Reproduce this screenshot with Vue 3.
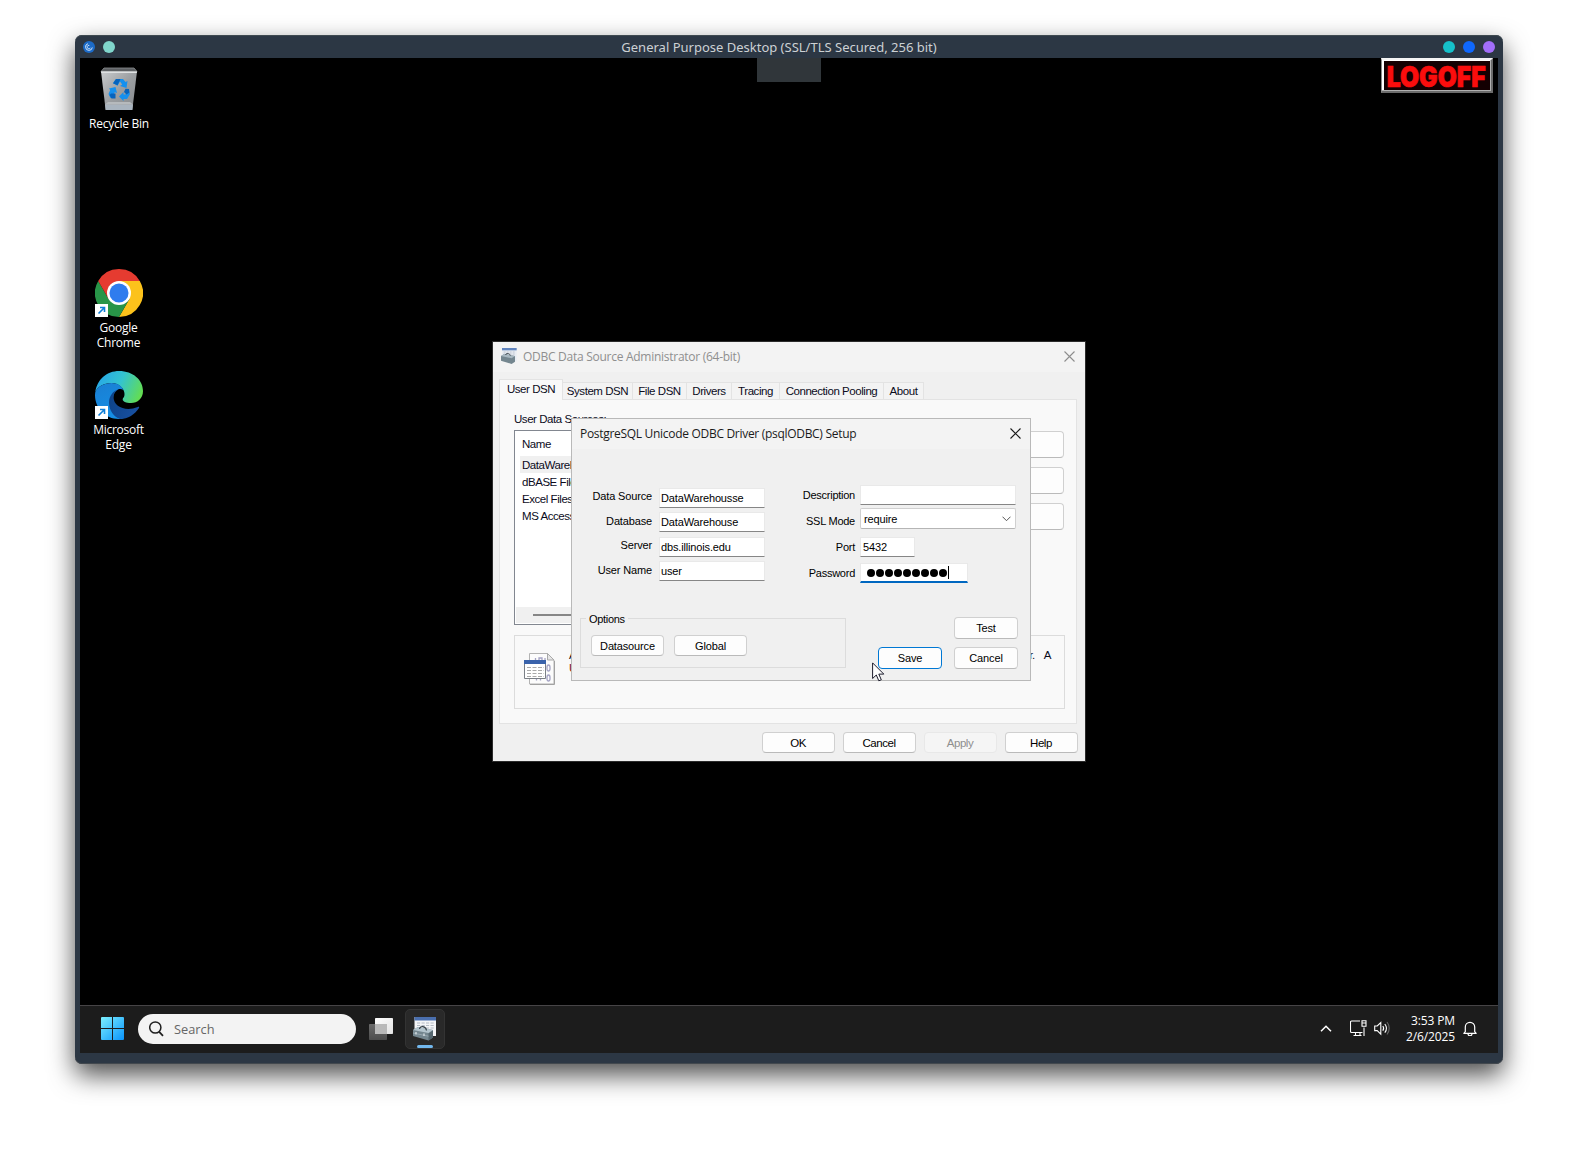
<script setup>
const tabs = [
  { name: 'User DSN', width: 64 },
  { name: 'System DSN', width: 70 },
  { name: 'File DSN', width: 54 },
  { name: 'Drivers', width: 45 },
  { name: 'Tracing', width: 48 },
  { name: 'Connection Pooling', width: 104 },
  { name: 'About', width: 40 },
]
const sources = ['DataWarehouse', 'dBASE Files', 'Excel Files', 'MS Access Database']
const leftFields = [
  { label: 'Data Source', value: 'DataWarehousse' },
  { label: 'Database', value: 'DataWarehouse' },
  { label: 'Server', value: 'dbs.illinois.edu' },
  { label: 'User Name', value: 'user' },
]
</script>

<template>
  <div class="page">
    <div class="window">
      <header class="titlebar">
        <div class="side">
          <svg width="12" height="12" viewBox="0 0 12 12">
            <circle cx="6" cy="6" r="6" fill="#1c6bc8" />
            <path d="M9.300 6.500A3.400 3.400 0 1 1 5 2.700M6.300 4.400A1.700 1.700 0 1 0 7.400 6.800" fill="none" stroke="#cfe2f8" stroke-width="1" />
          </svg>
          <i class="dot teal"></i>
        </div>
        <span class="caption">General Purpose Desktop (SSL/TLS Secured, 256 bit)</span>
        <div class="side right">
          <i class="dot cyan"></i><i class="dot blue"></i><i class="dot purple"></i>
        </div>
      </header>

      <main class="desktop">
        <div class="pull-tab"></div>
        <button class="logoff"><span>LOGOFF</span></button>

        <div class="shortcut recycle">
          <svg width="48" height="48" viewBox="0 0 48 48">
            <defs>
              <linearGradient id="bin" x1="0" y1="0" x2="1" y2="1">
                <stop offset="0" stop-color="#c9cbcd" /><stop offset=".5" stop-color="#9b9ea1" /><stop offset="1" stop-color="#85898c" />
              </linearGradient>
            </defs>
            <path d="M9 2h30l3 3.500H6z" fill="#5d6063" stroke="#8e9192" stroke-width=".8" />
            <path d="M6 5.500h36L37.300 44H10.700z" fill="url(#bin)" />
            <path d="M6 5.500h36l-.2 1.400H6.200z" fill="#dfe1e2" />
            <path d="M10 38.500h28L37.300 44H10.700z" fill="#a9b4bf" />
            <path d="M10 38.500 13 36h22l3 2.500z" fill="#b6babd" />
            <path d="M21 13h7l2.500 3 2-1-1 7-6.500-2 2.200-1.500L25 15.500l-2.500 4.300-4.500-2.600z" fill="#1590ee" />
            <path d="M21 13h4.500L22.500 19.300 18 17.200z" fill="#0663bd" />
            <path d="M14 22.500l6.500-1.500 1.500 6-2.200-.8-2 3.300L20 32h-4.500l-2-4 1.700-4z" fill="#1590ee" />
            <path d="M16 27.500h4.500v5H16.500L14.500 29z" fill="#0663bd" />
            <path d="M33 23.500 35 28l-3 5h-3.500v2L24 30.500 28.500 26v2.400h2z" fill="#1590ee" />
            <path d="M30.500 22.800 34 23l.5 3.500-3 2-2.500-2.500z" fill="#0663bd" />
          </svg>
          <span>Recycle Bin</span>
        </div>

        <div class="shortcut chrome">
          <svg width="48" height="48" viewBox="0 0 48 48">
            <path d="M24 24 3.215 12A24 24 0 0 1 44.785 12z" fill="#e53b30" />
            <path d="M24 12H44.785A24 24 0 0 1 24 48L34.392 30z" fill="#fcc21b" />
            <path d="M34.392 30 24 48A24 24 0 0 1 3.215 12L13.608 30z" fill="#289548" />
            <path d="M3.215 12 13.608 30 24 24V12z" fill="#e53b30" />
            <circle cx="24" cy="24" r="12" fill="#fff" />
            <circle cx="24" cy="24" r="9.500" fill="#2f7cee" />
            <path d="M0 35h13v13H0z" fill="#fff" />
            <path d="M3.500 44.500 9 39M5 38.500h4.500V43" fill="none" stroke="#0f7fd8" stroke-width="1.600" />
          </svg>
          <span>Google<br />Chrome</span>
        </div>

        <div class="shortcut edge">
          <svg width="48" height="48" viewBox="0 0 48 48">
            <defs>
              <linearGradient id="eTop" x1="0" y1=".3" x2="1" y2=".6">
                <stop offset="0" stop-color="#27a6e8" /><stop offset=".5" stop-color="#34c4cf" /><stop offset="1" stop-color="#63dd52" />
              </linearGradient>
              <linearGradient id="eMid" x1=".2" y1="0" x2=".6" y2="1">
                <stop offset="0" stop-color="#1a7fd3" /><stop offset="1" stop-color="#1590e6" />
              </linearGradient>
              <linearGradient id="eLow" x1="0" y1="0" x2="1" y2=".4">
                <stop offset="0" stop-color="#0d4286" /><stop offset="1" stop-color="#174f9f" />
              </linearGradient>
            </defs>
            <path d="M.300 21C2 8.500 12 0 24 0c14 0 24 9 24 20 0 7.500-5.500 12-12 12-5 0-8.300-1.600-8.300-3.500 0-1.500 1.800-2 1.800-5.500 0-5-5-11-13-11C8.500 12 3 15.500.300 21z" fill="url(#eTop)" />
            <path d="M.200 21.500C2.500 15.500 9 12 16.500 12c6.500 0 10.500 3.300 12 7-2-1.200-4-1.200-5.500-.500-3 1.500-5 5-5 9 0 9 7 15.500 15.500 16.500-3 2.600-6 4-9.500 4C10 48 0 37 0 24z" fill="url(#eMid)" />
            <path d="M23 18.500c-5 1.500-9 6.500-9 13 0 8 5 14.500 11 16.500 8 0 14.800-4.500 19-11 .6-1-.3-1.500-1.200-1C31 41 18.500 36 18.500 26c0-3 1.800-6 4.500-7.500z" fill="url(#eLow)" />
            <path d="M0 35h13v13H0z" fill="#fff" />
            <path d="M3.500 44.500 9 39M5 38.500h4.500V43" fill="none" stroke="#0f7fd8" stroke-width="1.600" />
          </svg>
          <span>Microsoft<br />Edge</span>
        </div>

        <section class="dialog admin">
          <div class="dlg-title">
            <svg class="app-icon" width="16" height="16" viewBox="0 0 24 24">
              <path d="M1.500 0h22v20h-22z" fill="#e9edf3" /><path d="M1.500 0h22v3.500h-22z" fill="#5f83bd" />
              <path d="M4 6h17M4 9h17" stroke="#a9b1c0" stroke-dasharray="3 1.500" />
              <path d="M0 12l5-3 16 3v8.500l-5 3.500L0 19z" fill="#74868f" /><path d="M0 12l5-3 16 3-5 3.500z" fill="#a8b8c1" />
              <path d="M7 10.500c0-3.500 6.500-3 7 1" fill="none" stroke="#3d474e" stroke-width="1.400" />
            </svg>
            <span>ODBC Data Source Administrator (64-bit)</span>
            <svg class="close" width="11" height="11" viewBox="0 0 11 11"><path d="M.5.5l10 10M10.500.5l-10 10" stroke="#8d8d8d" stroke-width="1.100" /></svg>
          </div>
          <nav class="tabs">
            <span v-for="(tab, i) in tabs" :key="tab.name" class="tab" :class="{ active: i === 0 }" :style="{ width: tab.width + 'px' }">{{ tab.name }}</span>
          </nav>
          <div class="panel">
            <div class="list-title">User Data Sources:</div>
            <div class="list-row">
              <div class="list">
                <div class="list-head">Name</div>
                <div v-for="(s, i) in sources" :key="s" class="item" :class="{ picked: i === 0 }">{{ s }}</div>
                <div class="scroll"><i></i></div>
              </div>
              <div class="actions"><i></i><i></i><i></i></div>
            </div>
            <div class="info">
              <svg width="31" height="32" viewBox="0 0 31 32">
                <path d="M5.500.5h18l6.500 6.500v24H5.500z" fill="#fcfcfc" stroke="#b3b3b3" />
                <path d="M6 31.500h24.500V8" fill="none" stroke="#a2a2a2" />
                <path d="M23.500.5v6.500H30z" fill="#e6e6e6" stroke="#a9a9a9" />
                <path d="M11.500 5v4M15 5h3v4h-3zM21 5v4M23 14.500a1.500 2.500 0 0 1 3 0v1a1.500 2.500 0 0 1-3 0zM12.500 22.500v5M16.500 22.500v5M23 24.500a1.500 2.500 0 0 1 3 0v1a1.500 2.500 0 0 1-3 0z" fill="none" stroke="#a4a3c4" stroke-width="1.300" />
                <path d="M.5 7.500h21v18H.5z" fill="#fff" stroke="#7a7f86" />
                <path d="M0 7h22v4H0z" fill="#3a63ab" />
                <path d="M3 14.500h17M3 17.500h17M3 20.500h17M3 23.500h17" stroke="#aaa" stroke-dasharray="4 1.500" />
              </svg>
              <div class="info-text">
                <p>An ODBC User data source stores information about how to connect to the indicated data provider.&nbsp;&nbsp; A</p>
                <p class="second">User data source is only visible to you, and can only be used on the current machine.</p>
              </div>
            </div>
          </div>
          <footer class="dlg-foot">
            <button class="btn">OK</button>
            <button class="btn">Cancel</button>
            <button class="btn off">Apply</button>
            <button class="btn">Help</button>
          </footer>
        </section>

        <section class="dialog setup">
          <div class="dlg-title">
            <span>PostgreSQL Unicode ODBC Driver (psqlODBC) Setup</span>
            <svg class="close" width="11" height="11" viewBox="0 0 11 11"><path d="M.5.5l10 10M10.500.5l-10 10" stroke="#1a1a1a" stroke-width="1.100" /></svg>
          </div>
          <div class="form">
            <div class="col left">
              <div v-for="f in leftFields" :key="f.label" class="row">
                <label>{{ f.label }}</label>
                <div class="input">{{ f.value }}</div>
              </div>
            </div>
            <div class="col rightc">
              <div class="row"><label>Description</label><div class="input wide"></div></div>
              <div class="row ssl">
                <label>SSL Mode</label>
                <div class="combo">require
                  <svg width="9" height="6" viewBox="0 0 9 6"><path d="M.5.7l4 4 4-4" fill="none" stroke="#555" /></svg>
                </div>
              </div>
              <div class="row port"><label>Port</label><div class="input short">5432</div></div>
              <div class="row pass">
                <label>Password</label>
                <div class="input focus"><i v-for="n in 9" :key="n" class="bullet"></i><i class="caret"></i></div>
              </div>
            </div>
          </div>
          <div class="bottom">
            <div class="group">
              <span class="legend">Options</span>
              <button class="btn">Datasource</button>
              <button class="btn">Global</button>
            </div>
            <div class="confirm">
              <button class="btn sm">Test</button>
              <div class="pair">
                <button class="btn sm primary">Save</button>
                <button class="btn sm">Cancel</button>
              </div>
            </div>
          </div>
        </section>

        <svg class="cursor" width="13" height="20" viewBox="0 0 13 20">
          <path d="M.6.900v15.600l3.700-3.500 2.500 5.800 2.500-1-2.500-5.700h5z" fill="#fff" stroke="#1c1c2c" stroke-width="1" />
        </svg>
      </main>

      <footer class="taskbar">
        <svg class="start" width="23" height="23" viewBox="0 0 23 23">
          <defs>
            <linearGradient id="win" gradientUnits="userSpaceOnUse" x1="0" y1="0" x2="23" y2="23"><stop offset="0" stop-color="#7df0ff" /><stop offset="1" stop-color="#0a94fb" /></linearGradient>
          </defs>
          <path d="M0 1a1 1 0 0 1 1-1h10v11H0zM12 0h10a1 1 0 0 1 1 1v10H12zM0 12h11v11H1a1 1 0 0 1-1-1zM12 12h11v10a1 1 0 0 1-1 1H12z" fill="url(#win)" />
        </svg>
        <div class="search">
          <svg width="15" height="16" viewBox="0 0 15 16"><circle cx="6.300" cy="6.500" r="5.600" fill="none" stroke="#1f1f1f" stroke-width="1.500" /><path d="M10.200 10.800 14 14.800" stroke="#1f1f1f" stroke-width="1.800" /></svg>
          <span>Search</span>
        </div>
        <svg class="views" width="24" height="22" viewBox="0 0 24 22">
          <defs>
            <linearGradient id="tvLight" x1="0" y1="0" x2="1" y2="1"><stop offset="0" stop-color="#fff" /><stop offset="1" stop-color="#e2e2e2" /></linearGradient>
            <linearGradient id="tvDark" x1="0" y1="0" x2="0" y2="1"><stop offset="0" stop-color="#6b6b6b" /><stop offset="1" stop-color="#4c4c4c" /></linearGradient>
          </defs>
          <rect x="6" width="18" height="16" rx=".8" fill="url(#tvLight)" />
          <rect y="6" width="18" height="16" rx=".8" fill="url(#tvDark)" />
          <path d="M6 6h12v10H6z" fill="#b9b9b9" />
        </svg>
        <div class="running">
          <svg width="24" height="24" viewBox="0 0 24 24">
            <path d="M1.500 0h21.500v19H1.500z" fill="#f4f5f7" /><path d="M1.500 0h21.500v3.500H1.500z" fill="#4a6fae" />
            <path d="M4 6h17M4 8.500h17M4 11h17" stroke="#b4bac4" stroke-dasharray="3.200 1.300" />
            <path d="M0 13l5-3 15 3v7.500l-4.500 3L0 19z" fill="#74868f" /><path d="M0 13l5-3 15 3-4.500 3z" fill="#b3c4cd" />
            <path d="M15.500 16.500l4.500-3v7l-4.500 3z" fill="#55666f" />
            <path d="M0 16l15.500 3.200" stroke="#a5b5bd" stroke-width=".7" /><path d="M3 15v2.500M11 16.500V19" stroke="#dfe6ea" stroke-width="1.200" />
            <path d="M6.500 12c.5-4 6.500-3 7 1.500" fill="none" stroke="#39434a" stroke-width="1.200" />
          </svg>
          <i></i>
        </div>
        <div class="tray">
          <svg class="up" width="12" height="8" viewBox="0 0 12 8"><path d="M1 6.300l5-5 5 5" fill="none" stroke="#fff" stroke-width="1.500" /></svg>
          <svg class="net" width="17" height="17" viewBox="0 0 17 17">
            <path d="M10 1H1.500a1 1 0 0 0-1 1v9.500a1 1 0 0 0 1 1h11M14 7.500V16M3.500 15.500h8M5.500 13v2.500M10 13v2.500M12 .8h4v5.400h-4zM12 3h4" fill="none" stroke="#fff" stroke-width="1.100" />
          </svg>
          <svg class="vol" width="17" height="15" viewBox="0 0 17 15">
            <path d="M.7 5v4.600h2.500l3.600 3.500V1.500L3.200 5z" fill="none" stroke="#fff" stroke-width="1.100" />
            <path d="M8.800 5a4 4 0 0 1 0 4.700M10.800 3a7 7 0 0 1 0 8.700" fill="none" stroke="#fff" stroke-width="1.100" />
            <path d="M13 1a10 10 0 0 1 0 12.500" fill="none" stroke="#666" stroke-width="1.100" />
          </svg>
          <div class="clock">3:53 PM<br />2/6/2025</div>
          <svg width="14" height="15" viewBox="0 0 14 15">
            <path d="M2.300 10.700V6a4.700 4.700 0 0 1 9.400 0v4.700l1.500 1.600H.8zM5 12.800a2 2 0 0 0 4 0" fill="none" stroke="#fff" stroke-width="1.200" stroke-linejoin="round" />
          </svg>
        </div>
      </footer>
    </div>
  </div>
</template>

<style>
html, body { margin: 0; background: #fff; overflow: hidden; }
</style>

<style scoped>
* { box-sizing: border-box; }
button { font: inherit; padding: 0; margin: 0; letter-spacing: inherit; }
svg { display: block; flex: none; }
.page { width: 1578px; height: 1149px; padding: 35px 75px 85px; background: #fff; overflow: hidden; }
.window {
  width: 1428px; height: 1029px; display: flex; flex-direction: column;
  padding: 0 5px 11px; background: #2c3744; border-radius: 7px;
  box-shadow: inset 0 1px 0 #3f4a50, inset 0 -1px 0 #42484e, 0 11px 26px rgba(0, 0, 0, .7);
}
.titlebar { height: 23px; flex: none; display: flex; align-items: center; padding: 0 3px; }
.side { width: 120px; display: flex; align-items: center; gap: 8px; }
.side.right { justify-content: flex-end; }
.caption { flex: 1; text-align: center; font: 13px/22px "Noto Sans", sans-serif; color: #ccd1d4; padding-right: 20px; }
.dot { width: 12px; height: 12px; border-radius: 50%; }
.teal { background: #80d6cc; }
.cyan { background: #16c1ca; }
.blue { background: #0f68fd; }
.purple { background: #a26efa; }

.desktop { flex: 1; position: relative; background: #000; }
.pull-tab { width: 64px; height: 24px; margin-left: 677px; background: #30363a; }
.logoff {
  position: absolute; right: 5px; top: 0; width: 112px; height: 35px;
  display: flex; align-items: center; justify-content: center; background: #140002;
  border: solid; border-width: 2px 2px 2px 1px; border-color: #f4f4f4 #6c6c6c #6c6c6c #8a8a8a;
  box-shadow: inset -1px -1px 0 #b0b0b0, inset 2px 1px 0 #fff;
  font: 900 29px/29px Inter, sans-serif; letter-spacing: 0; color: #fb0d0d;
  -webkit-text-stroke: .7px #fb0d0d;
}
.logoff span { transform: translateY(1px) scaleX(.85); }

.shortcut {
  position: absolute; width: 78px; display: flex; flex-direction: column; align-items: center;
  color: #fff; font: 12px/15px "Open Sans", sans-serif; letter-spacing: -.25px; text-align: center;
}
.recycle { left: 0; top: 8px; }
.recycle span { margin-top: 2px; }
.chrome { left: 0; top: 211px; }
.edge { left: 0; top: 313px; }
.chrome span, .edge span { margin-top: 3px; padding-right: 1px; }

.dialog { position: absolute; display: flex; flex-direction: column; background: #f0f0f0; color: #000; }
.dlg-title {
  height: 30px; flex: none; display: flex; align-items: center; background: #f3f3f3;
  font: 12px/30px "Open Sans", sans-serif; white-space: nowrap;
}
.close { margin: 0 0 2px auto; }
.btn {
  width: 73px; height: 21px; display: flex; align-items: center; justify-content: center;
  background: #fdfdfd; border: 1px solid #d0d0d0; border-bottom-color: #bababa; border-radius: 4px; color: #000;
}
.admin {
  left: 412px; top: 283px; width: 594px; height: 421px; border: 1px solid #2b2b2b;
  font: 11.5px/15px "Liberation Sans", Arial, sans-serif; letter-spacing: -.45px; color: #0b0b1c;
}
.admin .dlg-title { padding: 0 10px 0 8px; letter-spacing: -.27px; color: #8f8f8f; }
.app-icon { margin: 0 6px 2px 0; }
.tabs { height: 20px; margin: 7px 0 0 6px; display: flex; align-items: flex-end; position: relative; z-index: 1; }
.tab {
  height: 17px; line-height: 15px; padding-top: 1px; text-align: center; white-space: nowrap;
  background: #f3f3f3; border: 1px solid #e3e3e3; border-left: 0; border-bottom: 0;
}
.tab.active { height: 21px; line-height: 18px; padding-top: 0; margin-bottom: -1px; background: #f9f9f9; border-left: 1px solid #e3e3e3; }
.panel { width: 578px; height: 325px; margin-left: 6px; padding: 12px 12px 0 14px; background: #f9f9f9; border: 1px solid #e3e3e3; }
.list-row { display: flex; justify-content: space-between; margin-top: 3px; }
.list { width: 400px; height: 195px; border: 1px solid #828790; background: #fff; display: flex; flex-direction: column; padding: 1px; }
.list-head { height: 24px; line-height: 22px; padding: 1px 0 0 6px; }
.item { height: 17px; line-height: 18px; margin-left: 4px; padding-left: 2px; }
.item.picked { background: #f0f0f0; }
.scroll { height: 16px; margin-top: auto; background: #f0f0f0; padding: 7px 60px 0 17px; }
.scroll i { display: block; height: 2px; background: #868686; }
.actions { display: flex; flex-direction: column; gap: 9px; padding-top: 1px; }
.actions i { width: 90px; height: 27px; border: 1px solid #d0d0d0; border-bottom-color: #bababa; border-radius: 4px; background: #fdfdfd; }
.info { width: 551px; height: 74px; margin-top: 10px; border: 1px solid #dcdcdc; display: flex; padding: 17px 0 0 9px; }
.info-text { width: 482px; margin: -4px 0 0 14px; line-height: 13px; }
.info-text p { margin: 0; white-space: nowrap; text-align-last: justify; width: 482px; }
.info-text .second { text-align-last: left; color: #7a1010; }
.dlg-foot { display: flex; justify-content: flex-end; gap: 8px; margin-top: 8px; padding-right: 7px; }
.dlg-foot .btn { padding: 1px 1px 0 0; }
.off { background: #f5f5f5; border-color: #e8e8e8; color: #8e8e8e; }

.setup {
  left: 491px; top: 360px; width: 460px; height: 263px; border: 1px solid #b9b9b9;
  font: 11px/20px "Liberation Sans", Arial, sans-serif; letter-spacing: -.15px;
}
.setup .dlg-title { padding: 0 9px 0 8px; letter-spacing: -.3px; color: #1b1b1b; }
.form { height: 169px; flex: none; display: flex; }
.col { display: flex; flex-direction: column; }
.row { display: flex; gap: 6px; height: 20px; }
.left { width: 193px; padding-top: 39px; }
.left .row { margin-bottom: 4px; }
.left .row:nth-child(2) { margin-bottom: 5px; }
.left label { width: 80px; line-height: 18px; margin-right: 1px; }
.left .row:first-child label { line-height: 17px; }
.left .row:nth-child(3) label { line-height: 16px; }
label { text-align: right; width: 90px; flex: none; }
.input { width: 107px; height: 20px; padding-left: 2px; line-height: 19px; background: #fff; border: 1px solid #e9e9e9; border-bottom-color: #868686; white-space: nowrap; }
.left .input { padding-left: 1px; }
.rightc { padding-top: 36px; }
.rightc .input, .combo { margin-left: -1px; }
.wide { width: 156px; }
.short { width: 55px; }
.ssl { height: 21px; margin-top: 3px; }
.ssl label { padding-top: 3px; }
.combo {
  width: 156px; height: 21px; display: flex; align-items: center; justify-content: space-between;
  padding: 0 4px 0 3px; line-height: 18px; background: #fff; border: 1px solid #d0d0d0; border-bottom-color: #b5b5b5; border-radius: 2px;
}
.port { margin-top: 8px; }
.pass { margin-top: 6px; }
.rightc label { letter-spacing: -.25px; }
.rightc .input.focus { width: 108px; display: flex; align-items: center; border-bottom: 2px solid #0067c0; padding-left: 6px; gap: 1px; }
.bullet { width: 8px; height: 8px; border-radius: 50%; background: #000; }
.caret { width: 1px; height: 13px; background: #000; }
.bottom { display: flex; }
.group { position: relative; width: 266px; height: 50px; margin-left: 8px; padding: 16px 10px; display: flex; gap: 10px; border: 1px solid #dcdcdc; }
.legend { position: absolute; left: 5px; top: -10px; padding: 0 3px; background: #f0f0f0; letter-spacing: -.3px; }
.confirm { margin: -1px 0 0 32px; display: flex; flex-direction: column; align-items: flex-end; gap: 8px; }
.pair { display: flex; gap: 12px; }
.sm { width: 64px; height: 22px; }
.primary { border-color: #0078d4; }
.cursor { position: absolute; left: 792px; top: 604px; }

.taskbar { height: 48px; flex: none; display: flex; align-items: center; padding-bottom: 2px; background: #1c1c1c; border-top: 1px solid #464446; }
.start { margin-left: 21px; }
.search { width: 218px; height: 30px; margin-left: 14px; border-radius: 15px; background: #f3f3f3; display: flex; align-items: center; padding-left: 11px; }
.search span { margin-left: 10px; font: 12.8px/20px "Open Sans", sans-serif; color: #666; }
.views { margin-left: 13px; }
.running { position: relative; width: 40px; height: 40px; margin-left: 12px; padding: 7px 0 0 7px; border: 1px solid #333; border-radius: 5px; background: #292929; }
.running i { position: absolute; left: 11px; top: 35px; width: 16px; height: 3px; border-radius: 2px; background: #72b8ee; }
.tray { margin-left: auto; display: flex; align-items: center; padding-right: 21px; color: #fff; }
.net { margin-left: 18px; }
.vol { margin-left: 7px; }
.clock { width: 64px; text-align: right; font: 12px/16px "Open Sans", sans-serif; letter-spacing: -.12px; margin: 0 8px 0 0; }
</style>
